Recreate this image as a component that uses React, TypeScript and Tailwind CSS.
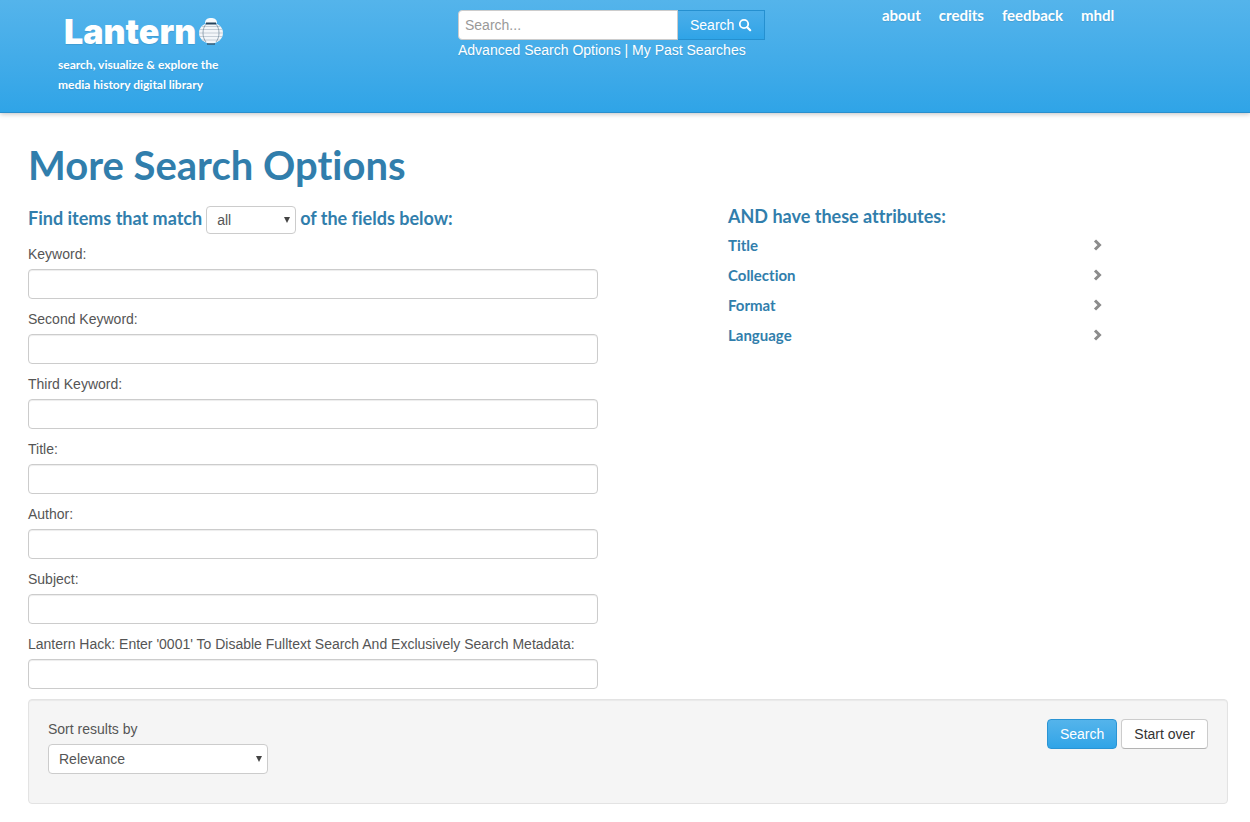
import { useState } from "react";
import type { ReactNode, SelectHTMLAttributes } from "react";

const navLinks = ["about", "credits", "feedback", "mhdl"];

const fields = [
  { id: "keyword", label: "Keyword:" },
  { id: "second-keyword", label: "Second Keyword:" },
  { id: "third-keyword", label: "Third Keyword:" },
  { id: "title", label: "Title:" },
  { id: "author", label: "Author:" },
  { id: "subject", label: "Subject:" },
  {
    id: "hack",
    label:
      "Lantern Hack: Enter '0001' To Disable Fulltext Search And Exclusively Search Metadata:",
  },
];

const attributes = ["Title", "Collection", "Format", "Language"];

function LanternIcon() {
  return (
    <svg viewBox="0 0 26 30" className="h-[30px] w-[26px]" aria-hidden="true">
      <path d="M7 6C7 2 10 1 13 1s6 1 6 5z" fill="#f8fbfd" />
      <ellipse cx="13" cy="16" rx="12" ry="10.500" fill="#f3f6f9" />
      <g fill="none" stroke="#b9c4ce" strokeWidth="0.8">
        <path d="M4 9.500h18M2 12.500h22M1 16h24M2 19.500h22M4 23h18" />
      </g>
      <path
        d="M8 7C4 12 4 20 8 25M18 7c4 5 4 13 0 18"
        fill="none"
        stroke="#7f93a3"
        strokeWidth="0.8"
      />
      <path d="M8 6.500h10" stroke="#27445d" strokeWidth="2" />
      <path d="M9 27h8" stroke="#31475a" strokeWidth="1.200" />
    </svg>
  );
}

function SearchIcon() {
  return (
    <svg viewBox="0 0 14 14" className="h-3.5 w-3.5" aria-hidden="true">
      <circle cx="6" cy="6" r="4.200" fill="none" stroke="#fff" strokeWidth="1.800" />
      <path d="M9.200 9.200l3 3" stroke="#fff" strokeWidth="2.200" strokeLinecap="round" />
    </svg>
  );
}

function ChevronIcon() {
  return (
    <svg viewBox="0 0 10 12" className="h-3 w-2.5" aria-hidden="true">
      <path d="M2 1.500L6.500 6 2 10.500" fill="none" stroke="#8c8c8c" strokeWidth="3" />
    </svg>
  );
}

function Select({
  className,
  children,
  ...props
}: SelectHTMLAttributes<HTMLSelectElement> & { children: ReactNode }) {
  return (
    <span className={`relative inline-block ${className}`}>
      <select
        {...props}
        className="h-full w-full appearance-none rounded border border-[#ccc] bg-white pl-2.5 pr-5 font-['Liberation_Sans',sans-serif] text-sm font-normal text-[#555]"
      >
        {children}
      </select>
      <svg
        viewBox="0 0 6 6"
        className="pointer-events-none absolute right-1.5 top-1/2 h-1.5 w-1.5 -translate-y-1/2"
        aria-hidden="true"
      >
        <path d="M0 0h6L3 6z" fill="#444" />
      </svg>
    </span>
  );
}

function Header() {
  return (
    <header className="border-b border-[#2a8fcd] bg-linear-to-b from-[#54b4eb] to-[#2fa4e7] text-white shadow-[0_1px_5px_rgba(0,0,0,0.25)]">
      <div className="grid min-h-28 grid-cols-12 gap-x-[30px] pl-[58px] pr-[22px] [text-shadow:0_1px_1px_rgba(0,0,0,0.1)]">
        <div className="col-span-4 pt-4">
          <a href="#" className="flex h-8 items-center gap-0.5 pl-1.5">
            <span className="font-['Inter',sans-serif] text-[34px] font-black leading-8">
              Lantern
            </span>
            <LanternIcon />
          </a>
          <p className="pt-[7px] font-['Lato',sans-serif] text-xs font-bold leading-5">
            search, visualize &amp; explore the
            <br />
            media history digital library
          </p>
        </div>
        <div className="col-span-4 pt-2.5">
          <form className="flex" onSubmit={(e) => e.preventDefault()}>
            <input
              type="text"
              aria-label="Search"
              placeholder="Search..."
              className="h-[30px] w-[220px] rounded-l border border-[#ccc] bg-white px-1.5 text-sm text-[#555] placeholder:text-[#999]"
            />
            <button
              type="submit"
              className="flex h-[30px] items-center gap-1 border border-l-0 border-[#2590d0] bg-linear-to-b from-[#4aaeea] to-[#2fa4e7] px-3 text-sm"
            >
              Search
              <SearchIcon />
            </button>
          </form>
          <p className="text-sm leading-5">
            <a href="#">Advanced Search Options</a> | <a href="#">My Past Searches</a>
          </p>
        </div>
        <nav className="col-span-4 flex gap-[18px] pl-6 pt-[5px] font-['Lato',sans-serif] text-[15px] font-bold leading-5">
          {navLinks.map((link) => (
            <a key={link} href="#">
              {link}
            </a>
          ))}
        </nav>
      </div>
    </header>
  );
}

export default function App() {
  const [match, setMatch] = useState("all");
  const [sort, setSort] = useState("relevance");

  return (
    <div className="bg-white font-['Liberation_Sans',Arial,sans-serif] text-sm leading-5 text-[#555] [font-variant-ligatures:none]">
      <Header />
      <main className="pb-[18px] pl-7 pr-[22px] pt-8">
        <h1 className="font-['Lato',sans-serif] text-[40px] font-bold leading-10 text-[#317eac]">
          More Search Options
        </h1>
        <form onSubmit={(e) => e.preventDefault()}>
          <div className="grid grid-cols-12 pt-[21px]">
            <div className="col-span-7">
              <h2 className="flex gap-1 pb-2.5 font-['Lato',sans-serif] text-lg font-bold leading-6 text-[#317eac]">
                <label htmlFor="match">Find items that match</label>
                <Select
                  id="match"
                  className="h-7 w-[90px]"
                  value={match}
                  onChange={(e) => setMatch(e.target.value)}
                >
                  <option value="all">all</option>
                  <option value="any">any</option>
                </Select>
                <span>of the fields below:</span>
              </h2>
              {fields.map((field) => (
                <div key={field.id} className="max-w-[570px] pb-2.5">
                  <label htmlFor={field.id} className="mb-[5px] block">
                    {field.label}
                  </label>
                  <input
                    id={field.id}
                    type="text"
                    className="block h-[30px] w-full rounded border border-[#ccc] bg-white px-1.5 shadow-[inset_0_1px_1px_rgba(0,0,0,0.075)]"
                  />
                </div>
              ))}
            </div>
            <div className="col-span-5 font-['Lato',sans-serif] font-bold text-[#317eac]">
              <h2 className="pb-1 text-lg leading-5">AND have these attributes:</h2>
              <ul className="max-w-[375px] text-[15px]">
                {attributes.map((name) => (
                  <li key={name}>
                    <button
                      type="button"
                      className="flex w-full items-center justify-between py-[5px] text-left leading-5"
                    >
                      {name}
                      <ChevronIcon />
                    </button>
                  </li>
                ))}
              </ul>
            </div>
          </div>
          <div className="flex items-start justify-between rounded border border-[#e3e3e3] bg-[#f5f5f5] px-[19px] pb-[29px] pt-[19px] shadow-[inset_0_1px_1px_rgba(0,0,0,0.05)]">
            <div>
              <label htmlFor="sort" className="mb-[5px] block">
                Sort results by
              </label>
              <Select
                id="sort"
                className="block! h-[30px] w-[220px]"
                value={sort}
                onChange={(e) => setSort(e.target.value)}
              >
                <option value="relevance">Relevance</option>
                <option value="title">Title</option>
                <option value="year">Year</option>
              </Select>
            </div>
            <div className="flex gap-1">
              <button
                type="submit"
                className="h-[30px] rounded border border-[#2a94d4] bg-linear-to-b from-[#54b4eb] to-[#2fa4e7] px-3 text-white"
              >
                Search
              </button>
              <button
                type="reset"
                className="h-[30px] rounded border border-[#ccc] border-b-[#b3b3b3] bg-white px-3 text-[#333]"
              >
                Start over
              </button>
            </div>
          </div>
        </form>
      </main>
    </div>
  );
}
